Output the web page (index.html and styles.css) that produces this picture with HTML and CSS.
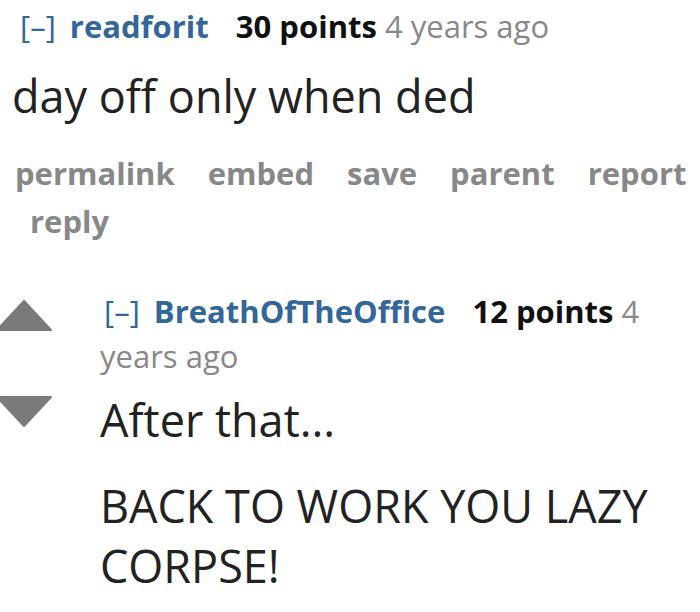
FILE: index.html
```html
<!DOCTYPE html>
<html lang="en">
<head>
    <meta charset="UTF-8">
    <title>comments</title>
    <link rel="stylesheet" href="styles.css">
</head>
<body>
    <div class="comment">
        <p class="tagline">
            <a class="expand">[–]</a>
            <a class="author">readforit</a>
            <span class="score">30 points</span>
            <time class="live">4 years ago</time>
        </p>
        <div class="md">
            <p>day off only when ded</p>
        </div>
        <ul class="buttons">
            <li>permalink</li>
            <li>embed</li>
            <li>save</li>
            <li>parent</li>
            <li>report</li>
            <li class="reply">reply</li>
        </ul>

        <!-- respuesta -->
        <div class="child">
            <div class="midcol">
                <svg class="arrow up" width="56" height="32" viewBox="0 0 56 32">
                    <polygon points="28,1 55,30 1,30" fill="#7a7a7a" stroke="#7a7a7a" stroke-width="2" stroke-linejoin="round"/>
                </svg>
                <svg class="arrow down" width="56" height="32" viewBox="0 0 56 32">
                    <polygon points="1,2 55,2 28,31" fill="#7a7a7a" stroke="#7a7a7a" stroke-width="2" stroke-linejoin="round"/>
                </svg>
            </div>
            <div class="entry">
                <p class="tagline">
                    <a class="expand">[–]</a>
                    <a class="author">BreathOfTheOffice</a>
                    <span class="score">12 points</span>
                    <time class="live">4 years ago</time>
                </p>
                <div class="md">
                    <p>After that...</p>
                    <p>BACK TO WORK YOU LAZY CORPSE!</p>
                </div>
            </div>
        </div>
    </div>
</body>
</html>
```

FILE: styles.css
```css
body {
    margin: 0;
    background-color: #ffffff;
    font-family: "Open Sans", "Noto Sans", sans-serif;
    color: #222222;
    overflow: hidden;
}
.comment {
    padding: 0 0 0 12px;
}
.tagline {
    margin: 0;
    font-size: 31px;
    line-height: 45px;
    color: #888888;
}
.comment > .tagline {
    padding: 4px 0 0 4px;
}
.expand {
    color: #369;
    margin: 0 6px 0 4px;
}
.author {
    color: #369;
    font-weight: bold;
    margin-right: 19px;
}
.score {
    color: #111111;
    font-weight: bold;
}
.live {
    color: #888888;
}
.md p {
    margin: 0;
    font-size: 45px;
    line-height: 60px;
    color: #222222;
}
.comment > .md {
    margin-top: 17px;
}
.buttons {
    list-style: none;
    margin: 23px 0 0 0;
    padding: 0 0 0 3px;
    display: flex;
    flex-wrap: wrap;
    column-gap: 33px;
    font-size: 31px;
    line-height: 48px;
    font-weight: bold;
    color: #888888;
}
.buttons .reply {
    margin-left: 15px;
}
/* comentario hijo */
.child {
    display: flex;
    margin: 44px 0 0 -16px;
}
.midcol {
    width: 104px;
    flex-shrink: 0;
    display: flex;
    flex-direction: column;
}
.arrow {
    display: block;
}
.arrow.up {
    margin-top: 11px;
}
.arrow.down {
    margin-top: 63px;
}
.entry .md {
    margin-top: 11px;
}
.entry .md p + p {
    margin-top: 26px;
}
```
